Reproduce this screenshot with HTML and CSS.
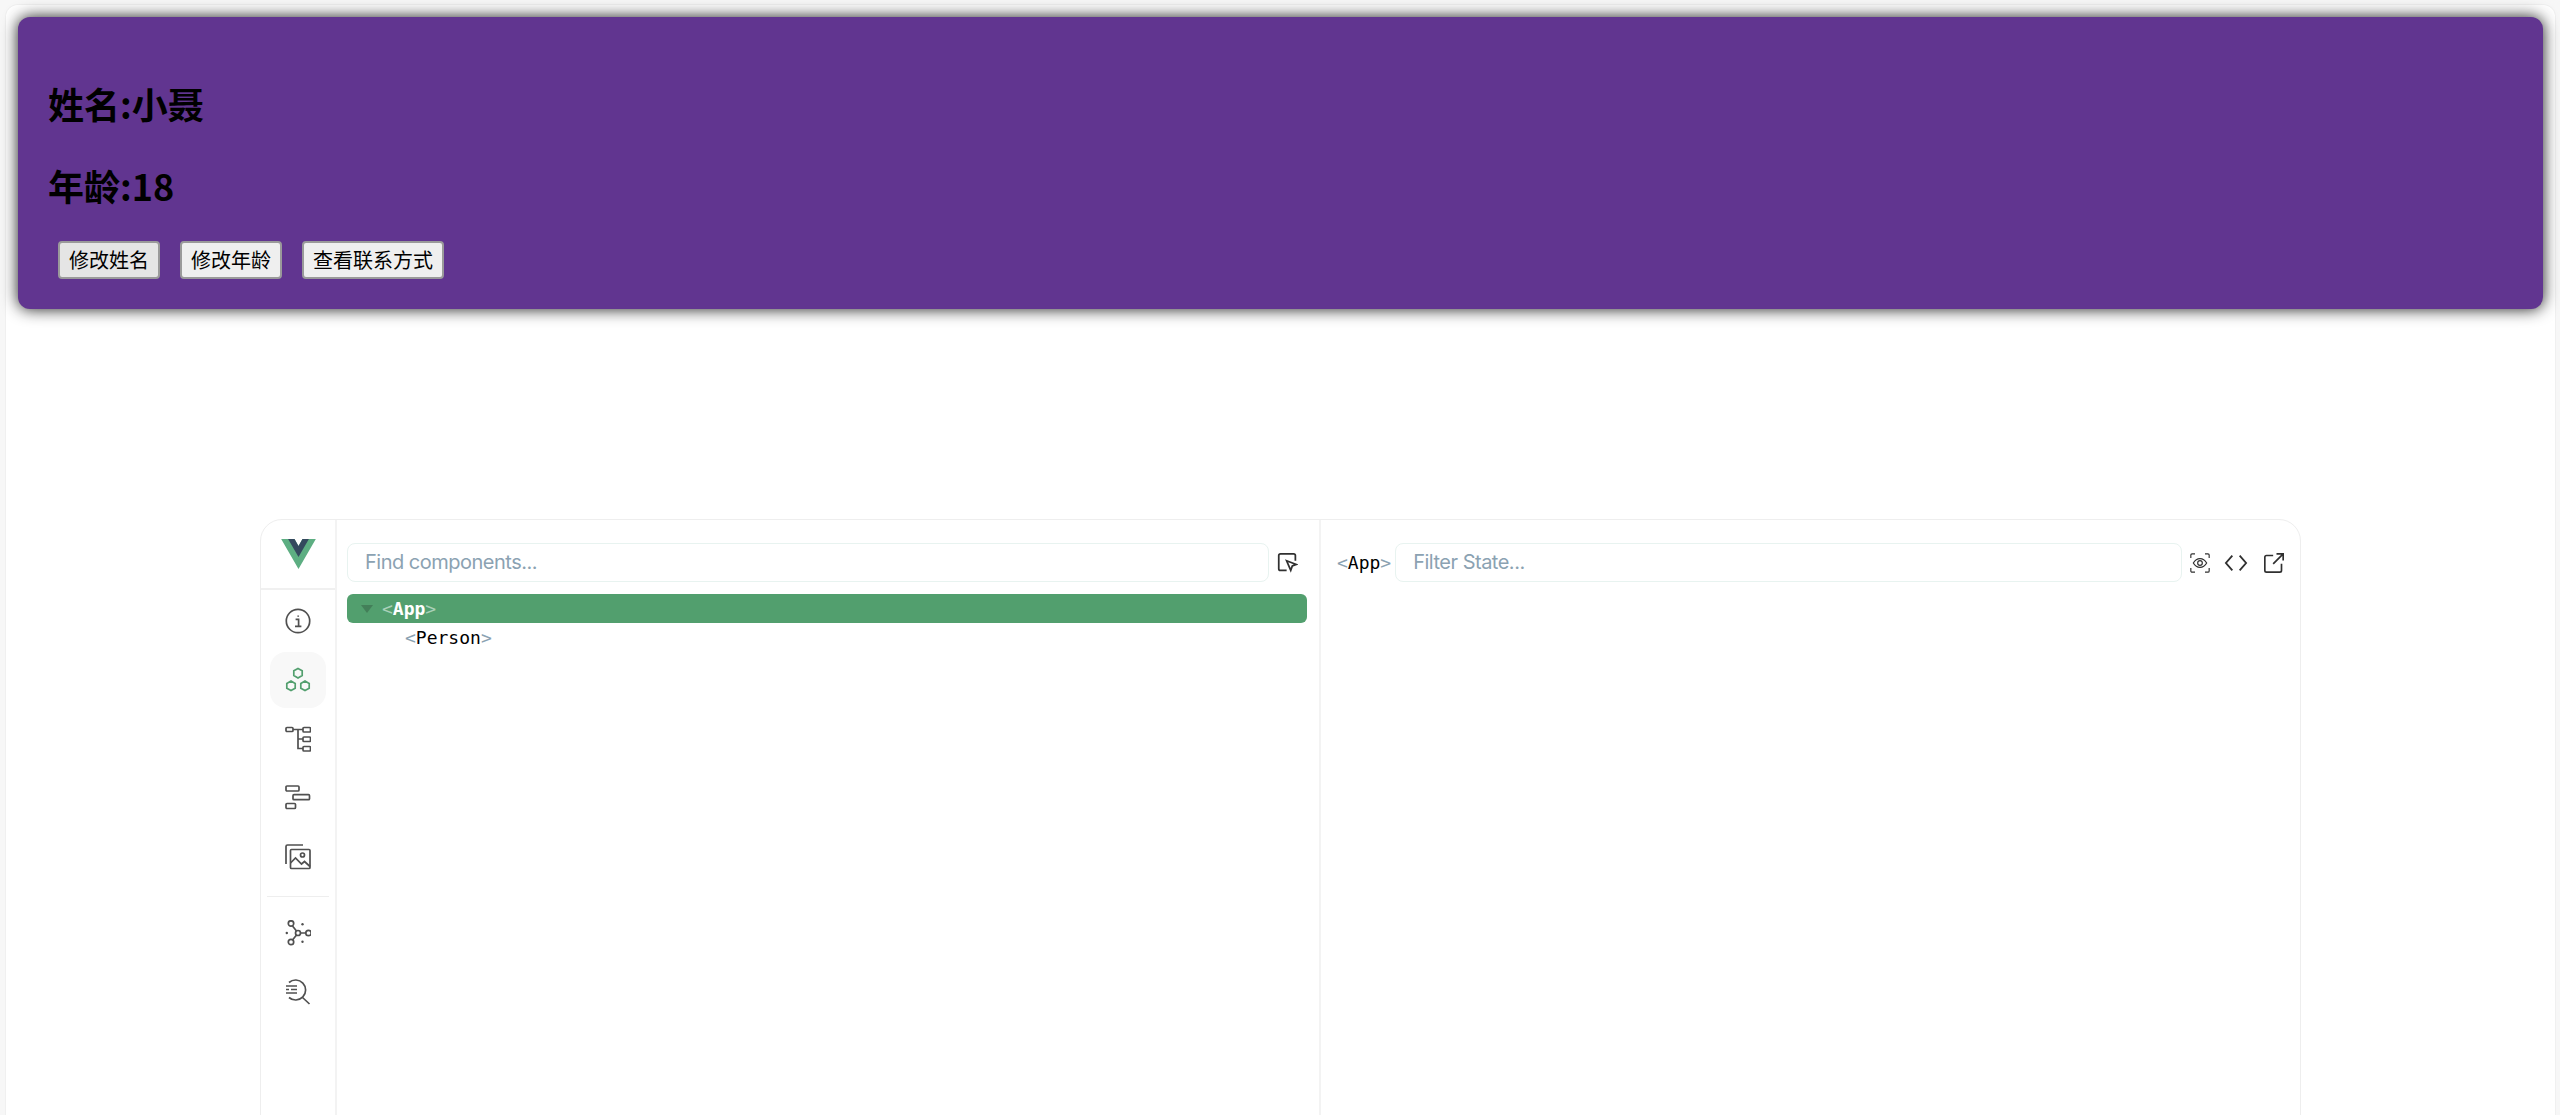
FILE: index.html
```html
<!DOCTYPE html>
<html lang="zh-CN">
<head>
    <meta charset="UTF-8">
    <title>Vue</title>
    <link rel="stylesheet" href="styles.css">
</head>
<body>
    <div class="frame">
        <div class="person">
            <h2>姓名:小聂</h2>
            <h2>年龄:18</h2>
            <div class="actions">
                <button type="button" class="hover">修改姓名</button>
                <button type="button">修改年龄</button>
                <button type="button">查看联系方式</button>
            </div>
        </div>
        <div class="devtools">
            <nav class="sidebar">
                <div class="logo">
                    <svg width="35" height="30" viewBox="0 0 261.76 226.69">
                        <path fill="#5dae82" d="M161.096.001l-30.225 52.351L100.647.001H-.005l130.876 226.688L261.749.001z"/>
                        <path fill="#34495e" d="M161.096.001l-30.225 52.351L100.647.001H52.346l78.525 136.01L209.398.001z"/>
                    </svg>
                </div>
                <div class="tabs">
                    <div class="tab">
                        <svg class="icon" viewBox="0 0 26 26"><circle cx="13" cy="13" r="11.7"/><path d="M10.6 11.4h3v7M10 18.4h6.4M13.2 7.4v1.4"/></svg>
                    </div>
                    <div class="tab active">
                        <svg class="icon" viewBox="0 0 26 26"><path d="M13 1.4l4.2 2.4v4.8L13 11l-4.2-2.4V3.8zM6 14l4.2 2.4v4.8L6 23.6l-4.2-2.4v-4.8zM20 14l4.2 2.4v4.8L20 23.6l-4.2-2.4v-4.8z"/></svg>
                    </div>
                    <div class="tab">
                        <svg class="icon" viewBox="0 0 26 26"><rect x="1" y="1.5" width="7" height="4" rx="1"/><rect x="18" y="1.5" width="7.500" height="4.500" rx="1"/><rect x="18" y="11" width="7.500" height="4.500" rx="1"/><rect x="18" y="20.500" width="7.500" height="4.500" rx="1"/><path d="M8 3.500h10M13 3.500v19h5M13 13h5"/></svg>
                    </div>
                    <div class="tab">
                        <svg class="icon" viewBox="0 0 26 26"><rect x="1" y="1" width="13" height="5" rx="1"/><rect x="8" y="9.700" width="16.500" height="5" rx="1"/><rect x="1" y="18.500" width="9.500" height="5" rx="1"/></svg>
                    </div>
                    <div class="tab">
                        <svg class="icon" viewBox="0 0 26 26"><path d="M18 1H2.500A1.500 1.500 0 0 0 1 2.500V20"/><rect x="5.500" y="5.500" width="19.500" height="19" rx="1"/><path d="M5.500 19l5-5 6 6 3-2.500 5.500 5"/><circle cx="17.500" cy="11" r="2"/></svg>
                    </div>
                    <div class="separator"></div>
                    <div class="tab">
                        <svg class="icon" viewBox="0 0 26 26"><circle cx="13" cy="13" r="2.500"/><circle cx="6" cy="3.500" r="2.700"/><circle cx="6" cy="22" r="2.700"/><circle cx="23.500" cy="13" r="2.700"/><path d="M7.500 6l4 5M7.500 20l4-5M15.500 13h5.200"/><circle class="dot" cx="1.800" cy="13" r="1.200"/><circle class="dot" cx="17.500" cy="4.200" r="1.200"/><circle class="dot" cx="17.500" cy="21.800" r="1.200"/></svg>
                    </div>
                    <div class="tab">
                        <svg class="icon" viewBox="0 0 26 26"><path d="M4 3.500A10 10 0 1 1 4 18.500M17 18l7.500 7M1 7h11M1 10.500h3M6 10.500h6M1 14h11"/></svg>
                    </div>
                </div>
            </nav>
            <section class="pane tree-pane">
                <div class="toolbar">
                    <div class="search">Find components...</div>
                    <svg class="icon tool" viewBox="0 0 24 24"><path d="M11 21H4a2 2 0 0 1-2-2V4a2 2 0 0 1 2-2h15a2 2 0 0 1 2 2v6"/><path class="solid" d="M11 10l11 4.200-4.500 1.800-1.800 5z"/></svg>
                </div>
                <div class="node selected"><span class="arrow"></span><span class="tag"><i>&lt;</i>App<i>&gt;</i></span></div>
                <div class="node child"><span class="tag"><i>&lt;</i>Person<i>&gt;</i></span></div>
            </section>
            <section class="pane state-pane">
                <div class="toolbar">
                    <span class="tag"><i>&lt;</i>App<i>&gt;</i></span>
                    <div class="search">Filter State...</div>
                    <svg class="icon tool thin eye" viewBox="0 0 24 24"><path d="M1 6V2.500A1.500 1.500 0 0 1 2.500 1H6M18 1h3.500A1.500 1.500 0 0 1 23 2.500V6M23 18v3.500a1.500 1.500 0 0 1-1.500 1.500H18M6 23H2.500A1.500 1.500 0 0 1 1 21.500V18"/><path d="M4 12c2-3.500 4.800-5.300 8-5.300s6 1.800 8 5.300c-2 3.500-4.800 5.300-8 5.300S6 15.500 4 12z"/><circle cx="12" cy="12" r="2.800"/></svg>
                    <svg class="icon tool code" viewBox="0 0 24 24"><path d="M8 4l-7 8 7 8M16 4l7 8-7 8"/></svg>
                    <svg class="icon tool" viewBox="0 0 24 24"><path d="M11 3H3a2 2 0 0 0-2 2v16a2 2 0 0 0 2 2h16a2 2 0 0 0 2-2v-8M11 13L23 1M15 1h8v8"/></svg>
                </div>
            </section>
        </div>
    </div>
</body>
</html>
```

FILE: styles.css
```css
:root {
    --border: #eeeeee;
    --input-border: #e8f3f0;
    --placeholder: #8ba2b2;
    --green: #529f6e;
}
html, body {
    margin: 0;
    height: 100%;
    overflow: hidden;
}
body {
    background-color: #f7f7f7;
    font-family: "Noto Sans CJK SC", "Liberation Sans", sans-serif;
}
.frame {
    margin: 5px 5px 0 6px;
    height: 100%;
    box-sizing: border-box;
    padding: 12px 12px 0;
    background-color: #fff;
    border-radius: 12px 12px 0 0;
    box-shadow: 0 0 0 1px #f0f0f0;
}
.person {
    padding: 30px;
    background-color: #613590;
    border-radius: 12px;
    box-shadow: 0 0 16px rgba(0, 0, 0, .9);
}
.person h2 {
    margin: 30px 0;
    font-size: 36px;
    font-weight: 700;
    color: #000;
}
.actions {
    display: flex;
    gap: 20px;
    padding: 0 10px;
}
.actions button {
    height: 38px;
    padding: 0 9px;
    font: 400 20px "Noto Sans CJK SC", sans-serif;
    line-height: 1;
    color: #000;
    background-color: #efefef;
    border: 2px solid #9a9a9a;
    border-radius: 4px;
}
.actions .hover {
    background-color: #e5e5e5;
}

.devtools {
    display: flex;
    width: 2041px;
    height: 700px;
    margin: 210px auto 0;
    box-sizing: border-box;
    border: 1px solid var(--border);
    border-radius: 22px 22px 0 0;
}
.sidebar {
    flex: none;
    box-sizing: border-box;
    width: 76px;
    border-right: 2px solid #f3f3f3;
}
.logo {
    display: flex;
    align-items: flex-start;
    justify-content: center;
    height: 70px;
    padding-top: 19px;
    box-sizing: border-box;
    border-bottom: 2px solid #f0f0f0;
}
.tabs {
    display: flex;
    flex-direction: column;
    align-items: center;
    gap: 3px;
    padding-top: 3px;
}
.tab {
    display: flex;
    align-items: center;
    justify-content: center;
    width: 56px;
    height: 56px;
    border-radius: 16px;
}
.tab.active {
    background-color: #f8f8f8;
}
.separator {
    width: 62px;
    height: 1px;
    margin: 8px 0 5px;
    background-color: #eeeeee;
}
.icon {
    width: 26px;
    height: 26px;
    fill: none;
    stroke: #505050;
    stroke-width: 1.7;
}
.icon .dot {
    fill: #505050;
    stroke: none;
}
.tab.active .icon {
    stroke: #529f6e;
}

.pane {
    box-sizing: border-box;
    padding: 23px 12px 0 10px;
}
.tree-pane {
    flex: none;
    width: 984px;
    border-right: 2px solid #f3f3f3;
}
.state-pane {
    flex: 1;
    padding: 23px 16px 0 16px;
}
.toolbar {
    display: flex;
    align-items: center;
    gap: 8px;
    height: 39px;
    margin-bottom: 12px;
}
.search {
    flex: 1;
    height: 39px;
    box-sizing: border-box;
    padding: 0 17px;
    font: 400 20px/37px Inter, "Liberation Sans", sans-serif;
    letter-spacing: -0.5px;
    color: var(--placeholder);
    border: 1px solid var(--input-border);
    border-radius: 8px;
}
.tool {
    flex: none;
    width: 20px;
    height: 20px;
    stroke: #303030;
    stroke-width: 2;
}
.tree-pane .tool {
    width: 21px;
    height: 21px;
    margin-right: 9px;
}
.tool.thin {
    stroke-width: 1.400;
}
.tool.eye {
    margin-right: 6px;
}
.tool.code {
    width: 24px;
    height: 22px;
    margin-right: 8px;
}
.tool .solid {
    fill: #fff;
}
.tag {
    font: 400 18px/29px "DejaVu Sans Mono", "Liberation Mono", monospace;
    color: #000;
}
.toolbar .tag {
    margin-right: -4px;
}
.tag i {
    font-style: normal;
    color: #8ba2b2;
}
.node {
    display: flex;
    align-items: center;
    height: 29px;
    border-radius: 6px;
}
.node.selected {
    padding-left: 14px;
    background-color: var(--green);
}
.node.selected .tag {
    color: #fff;
    font-weight: 700;
    margin-left: 9px;
}
.node.selected .tag i {
    color: #a9d0b8;
    font-weight: 400;
}
.arrow {
    width: 0;
    height: 0;
    border-left: 6px solid transparent;
    border-right: 6px solid transparent;
    border-top: 8px solid #437f59;
}
.node.child {
    padding-left: 58px;
}
```
